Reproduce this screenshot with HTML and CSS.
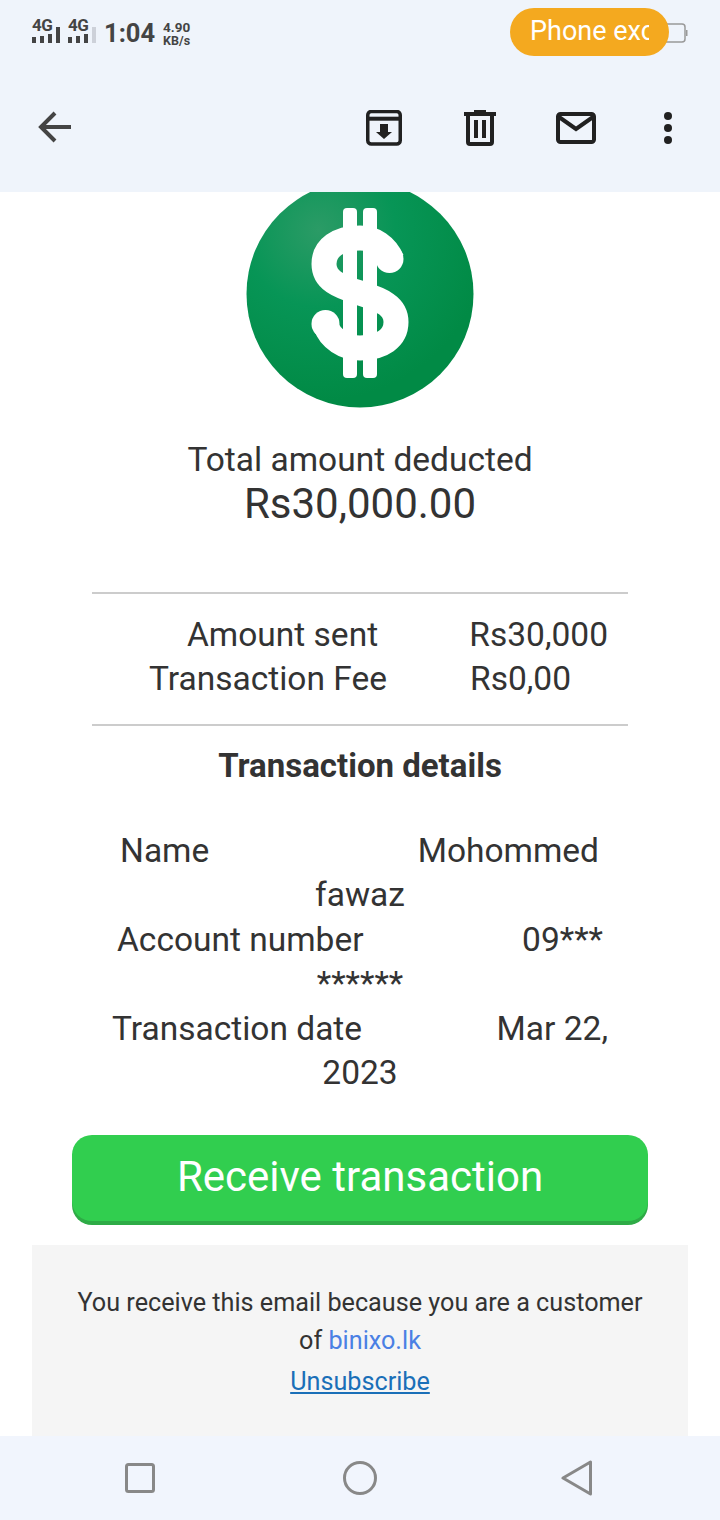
FILE: index.html
```html
<!DOCTYPE html>
<html lang="en">

<head>
    <meta charset="UTF-8">
    <meta name="viewport" content="width=device-width">
    <title>Transaction email</title>
    <link rel="stylesheet" href="styles.css">
</head>

<body>
    <header class="top">
        <div class="status">
            <div class="signal">
                <div class="sim">
                    <span class="sim-label">4G</span>
                    <div class="bars">
                        <i class="b1"></i><i class="b2"></i><i class="b3"></i><i class="b4"></i>
                    </div>
                </div>
                <div class="sim">
                    <span class="sim-label">4G</span>
                    <div class="bars">
                        <i class="b1"></i><i class="b2"></i><i class="b3"></i><i class="b4 off"></i>
                    </div>
                </div>
                <span class="clock">1:04</span>
                <span class="speed">4.90<small>KB/s</small></span>
            </div>
            <svg class="battery" width="48" height="20" viewBox="0 0 48 20">
                <rect x="4" y="1" width="41" height="18" rx="3" fill="none" stroke="#999" stroke-width="1.5" />
                <rect x="46" y="7" width="1.500" height="6" fill="#999" />
            </svg>
        </div>
        <div class="pill"><span class="pill-text">Phone exc</span></div>

        <nav class="toolbar">
            <svg width="40" height="40" viewBox="0 0 40 40">
                <path d="M35 19H6M19 5 5 19 19 33" fill="none" stroke="#444" stroke-width="4" />
            </svg>
            <div class="actions">
                <svg width="36" height="36" viewBox="0 0 36 36">
                    <rect x="1.750" y="1.500" width="32.500" height="32.500" rx="3.500" fill="none" stroke="#212121" stroke-width="3.500" />
                    <path d="M2 8.700H34" stroke="#212121" stroke-width="4" />
                    <path d="M14 14h8v8h4l-8 7-8-7h4z" fill="#212121" />
                </svg>
                <svg width="32" height="36" viewBox="0 0 32 36">
                    <path d="M0 4H32" stroke="#212121" stroke-width="4" />
                    <path d="M10 1h12" stroke="#212121" stroke-width="2" />
                    <path d="M4 5V32a2 2 0 0 0 2 2h20a2 2 0 0 0 2-2V5" fill="none" stroke="#212121" stroke-width="4" />
                    <path d="M12 10V28M20 10V28" stroke="#212121" stroke-width="4" />
                </svg>
                <svg width="40" height="32" viewBox="0 0 40 32">
                    <rect x="2" y="2" width="36" height="28" rx="2.500" fill="none" stroke="#212121" stroke-width="4" />
                    <path d="M3 5 20 17 37 5" fill="none" stroke="#212121" stroke-width="4" />
                </svg>
                <svg width="8" height="32" viewBox="0 0 8 32">
                    <circle cx="4" cy="4" r="4" fill="#212121" />
                    <circle cx="4" cy="16" r="4" fill="#212121" />
                    <circle cx="4" cy="28" r="4" fill="#212121" />
                </svg>
            </div>
        </nav>
    </header>

    <main class="mail">
        <svg class="coin" width="228" height="228" viewBox="0 0 228 228">
            <defs>
                <radialGradient id="shine" cx="32%" cy="22%" r="75%">
                    <stop offset="0" stop-color="#2b9b66" />
                    <stop offset="0.45" stop-color="#079556" />
                    <stop offset="1" stop-color="#018a45" />
                </radialGradient>
            </defs>
            <circle cx="114" cy="114" r="113.500" fill="url(#shine)" />
            <rect x="97" y="28" width="14" height="170" rx="4" fill="#fff" />
            <rect x="117" y="28" width="14" height="170" rx="4" fill="#fff" />
            <path d="M146 80C140 66 128 58 114 58C92 58 78 68 78 84C78 100 92 106 114 113C136 120 150 126 150 142C150 158 136 168 114 168C98 168 84 158 80 146" fill="none" stroke="#fff" stroke-width="25" />
            <circle cx="143.500" cy="79" r="14" fill="#fff" />
            <circle cx="79.500" cy="144" r="14" fill="#fff" />
        </svg>

        <p class="total-label">Total amount deducted</p>
        <p class="total-value">Rs30,000.00</p>

        <div class="summary">
            <div class="row row-sent"><span>Amount sent</span><span>Rs30,000</span></div>
            <div class="row row-fee"><span>Transaction Fee</span><span>Rs0,00</span></div>
        </div>

        <h2 class="details-title">Transaction details</h2>

        <div class="details">
            <div class="row row-name"><span>Name</span><span>Mohommed</span></div>
            <div class="row-wrap">fawaz</div>
            <div class="row row-account"><span>Account number</span><span>09***</span></div>
            <div class="row-wrap">******</div>
            <div class="row row-date"><span>Transaction date</span><span>Mar 22,</span></div>
            <div class="row-wrap">2023</div>
        </div>

        <a class="cta" href="#">Receive transaction</a>

        <footer class="foot">
            <p>You receive this email because you are a customer<br>of <a class="brand" href="#">binixo.lk</a></p>
            <a class="unsub" href="#">Unsubscribe</a>
        </footer>
    </main>

    <nav class="sysnav">
        <svg width="30" height="30" viewBox="0 0 30 30">
            <rect x="1.500" y="1.500" width="27" height="27" rx="2" fill="none" stroke="#888" stroke-width="3" />
        </svg>
        <svg width="34" height="34" viewBox="0 0 34 34">
            <circle cx="17" cy="17" r="15.500" fill="none" stroke="#888" stroke-width="3" />
        </svg>
        <svg width="32" height="36" viewBox="0 0 32 36">
            <path d="M29.500 2V34L2 18Z" fill="none" stroke="#888" stroke-width="3" stroke-linejoin="round" />
        </svg>
    </nav>
</body>

</html>
```

FILE: styles.css
```css
body {
    font-family: 'Roboto', 'Liberation Sans', sans-serif;
    background-color: #fff;
    color: #333;
    width: 720px;
    height: 1520px;
    margin: 0;
    display: flex;
    flex-direction: column;
    overflow: hidden;
    position: relative;
}

p {
    margin: 0;
}

.top {
    background-color: #eff4fb;
    height: 192px;
    flex: none;
}

.status {
    display: flex;
    justify-content: space-between;
    align-items: flex-start;
    padding: 18px 32px 0;
    height: 30px;
}

.signal {
    display: flex;
    align-items: flex-start;
    color: #444;
}

.sim {
    width: 36px;
    position: relative;
    height: 25px;
}

.sim-label {
    display: block;
    font-size: 17px;
    font-weight: 700;
    line-height: 14px;
    letter-spacing: -0.5px;
}

.bars {
    position: absolute;
    left: 0;
    bottom: 0;
    display: flex;
    align-items: flex-end;
    gap: 4px;
}

.bars i {
    display: block;
    width: 4px;
    background-color: #444;
}

.bars .b1 { height: 6px; }
.bars .b2 { height: 7px; }
.bars .b3 { height: 9px; }
.bars .b4 { height: 16px; }
.bars .off { background-color: #cdd1d9; }

.clock {
    font-size: 25.500px;
    font-weight: 700;
    line-height: 30px;
}

.speed {
    font-size: 13.500px;
    font-weight: 700;
    line-height: 13px;
    margin: 3px 0 0 8px;
    display: flex;
    flex-direction: column;
}

.speed small {
    font-size: 12.500px;
    line-height: 13px;
}

.battery {
    margin-top: 5px;
}

.pill {
    position: absolute;
    left: 510px;
    top: 8px;
    width: 159px;
    height: 48px;
    border-radius: 24px;
    background-color: #f4a91f;
    color: #fff;
    font-size: 27px;
    line-height: 46px;
}

.pill-text {
    display: block;
    width: 119px;
    margin-left: 20px;
    overflow: hidden;
    white-space: nowrap;
}

.toolbar {
    display: flex;
    justify-content: space-between;
    align-items: center;
    padding: 0 48px 0 36px;
    height: 36px;
    margin-top: 62px;
}

.actions {
    display: flex;
    align-items: center;
}

.actions svg:nth-child(1) { margin-right: 62px; }
.actions svg:nth-child(2) { margin-right: 60px; }
.actions svg:nth-child(3) { margin-right: 68px; }

.mail {
    flex: 1;
    min-height: 0;
    overflow: hidden;
    display: flex;
    flex-direction: column;
    align-items: center;
}

.coin {
    margin-top: -12px;
    flex: none;
}

.total-label {
    font-size: 33.500px;
    line-height: 44px;
    margin-top: 30px;
}

.total-value {
    font-size: 42px;
    line-height: 44px;
}

.summary {
    width: 536px;
    margin-top: 66px;
    padding: 19px 0 23px;
    border-top: 2px solid #ccc;
    border-bottom: 2px solid #ccc;
}

.row {
    display: flex;
    justify-content: space-between;
    font-size: 33.500px;
    line-height: 44px;
    white-space: nowrap;
}

.row-sent { padding: 0 20px 0 95px; }
.row-fee { padding: 0 57px 0 57px; }

.details-title {
    font-size: 33px;
    line-height: 44px;
    font-weight: 700;
    margin: 18px 0 0;
}

.details {
    width: 576px;
    margin-top: 41px;
}

.details .row,
.row-wrap {
    line-height: 44.400px;
}

.row-name { padding: 0 49px 0 48px; }
.row-account { padding: 0 45px 0 45px; }
.row-date { padding: 0 40px 0 40px; }

.row-wrap {
    font-size: 33.500px;
    text-align: center;
}

.cta {
    display: block;
    width: 576px;
    height: 86px;
    margin-top: 39.600px;
    flex: none;
    border-radius: 20px;
    background-color: #31ce4f;
    box-shadow: 0 4px 0 #2eab46;
    color: #fff;
    font-size: 42px;
    line-height: 84px;
    text-align: center;
    text-decoration: none;
}

.foot {
    width: 656px;
    margin-top: 24px;
    flex: 1;
    background-color: #f5f5f5;
    text-align: center;
    font-size: 25.200px;
    line-height: 38px;
    padding-top: 39px;
}

.brand {
    color: #4a80e4;
    text-decoration: none;
}

.unsub {
    display: inline-block;
    color: #1a6fb8;
    margin-top: 3px;
}

.sysnav {
    flex: none;
    height: 84px;
    background-color: #f1f5fd;
    display: flex;
    align-items: center;
    padding-left: 125px;
}

.sysnav svg:nth-child(1) { margin-right: 188px; }
.sysnav svg:nth-child(2) { margin-right: 184px; }
```
